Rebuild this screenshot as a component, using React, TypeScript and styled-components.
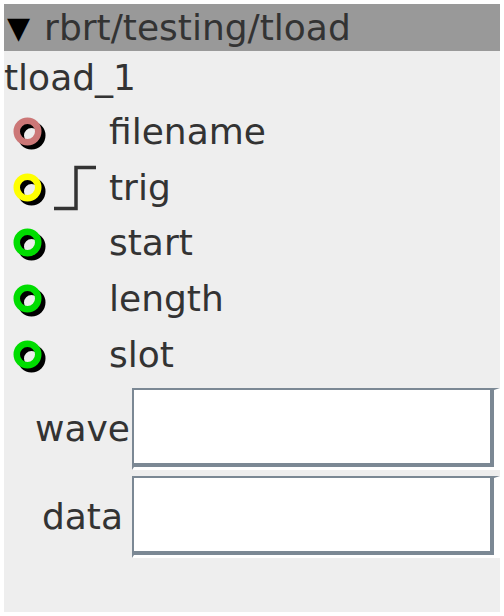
import React from "react";
import styled, { createGlobalStyle } from "styled-components";

const Global = createGlobalStyle`
  html, body { margin: 0; padding: 0; background: #ffffff; }
  body { padding: 4px; font-family: "DejaVu Sans", "Liberation Sans", sans-serif; }
`;

const Panel = styled.div`
  width: 496px;
  height: 608px;
  background: #eeeeee;
  color: #333333;
  font-size: 36px;
  display: flex;
  flex-direction: column;
`;

const Header = styled.div`
  height: 47px;
  background: #999999;
  display: flex;
  align-items: center;
  padding-left: 3px;
  gap: 14px;
  line-height: 1;
`;

const Arrow = styled.span`
  color: #000000;
  font-size: 30px;
`;

const Title = styled.div`
  height: 53px;
  display: flex;
  align-items: center;
  line-height: 1;
`;

const Ports = styled.div`
  display: flex;
  flex-direction: column;
`;

const PortRow = styled.div`
  height: 55.75px;
  display: grid;
  grid-template-columns: 48px 57px 1fr;
  align-items: center;
  line-height: 1;
`;

const IconCell = styled.div`
  display: flex;
  align-items: center;
  padding-left: 8px;
`;

const StepCell = styled.div`
  display: flex;
  align-items: center;
`;

const Label = styled.span``;

const Fields = styled.div`
  margin-top: 5px;
  padding-left: 31px;
  display: grid;
  grid-template-columns: auto 1fr;
  row-gap: 6px;
`;

const FieldLabel = styled.div`
  display: flex;
  align-items: center;
  justify-content: center;
  padding-right: 2px;
  line-height: 1;
`;

const Entry = styled.div`
  height: 82px;
  box-sizing: border-box;
  border-style: solid;
  border-width: 2px 6px 3px 2px;
  border-color: #7b8894 #ffffff #ffffff #7b8894;
  background: #ffffff;
  display: flex;
`;

const EntryInner = styled.div`
  flex: 1;
  border-right: 4px solid #7b8894;
  border-bottom: 4px solid #7b8894;
  background: #ffffff;
`;

const Port = ({ color }: { color: string }) => (
  <svg width="40" height="40" viewBox="0 0 40 40">
    <circle cx="19.5" cy="23.5" r="10.75" fill="none" stroke="#000000" strokeWidth="6.5" />
    <circle cx="15.5" cy="19.5" r="10.75" fill="none" stroke={color} strokeWidth="6.5" />
  </svg>
);

const Step = () => (
  <svg width="46" height="48" viewBox="0 0 46 48">
    <path d="M2 44.5 H24 V3.5 H44" fill="none" stroke="#333333" strokeWidth="3.5" />
  </svg>
);

const ports = [
  { name: "filename", color: "#cc7777", step: false },
  { name: "trig", color: "#ffff00", step: true },
  { name: "start", color: "#00dd00", step: false },
  { name: "length", color: "#00dd00", step: false },
  { name: "slot", color: "#00dd00", step: false },
];

export default function App() {
  return (
    <>
      <Global />
      <Panel>
        <Header>
          <Arrow>▼</Arrow>
          <span>rbrt/testing/tload</span>
        </Header>
        <Title>tload_1</Title>
        <Ports>
          {ports.map((p) => (
            <PortRow key={p.name}>
              <IconCell>
                <Port color={p.color} />
              </IconCell>
              <StepCell>{p.step ? <Step /> : null}</StepCell>
              <Label>{p.name}</Label>
            </PortRow>
          ))}
        </Ports>
        <Fields>
          <FieldLabel>wave</FieldLabel>
          <Entry>
            <EntryInner />
          </Entry>
          <FieldLabel>data</FieldLabel>
          <Entry>
            <EntryInner />
          </Entry>
        </Fields>
      </Panel>
    </>
  );
}
